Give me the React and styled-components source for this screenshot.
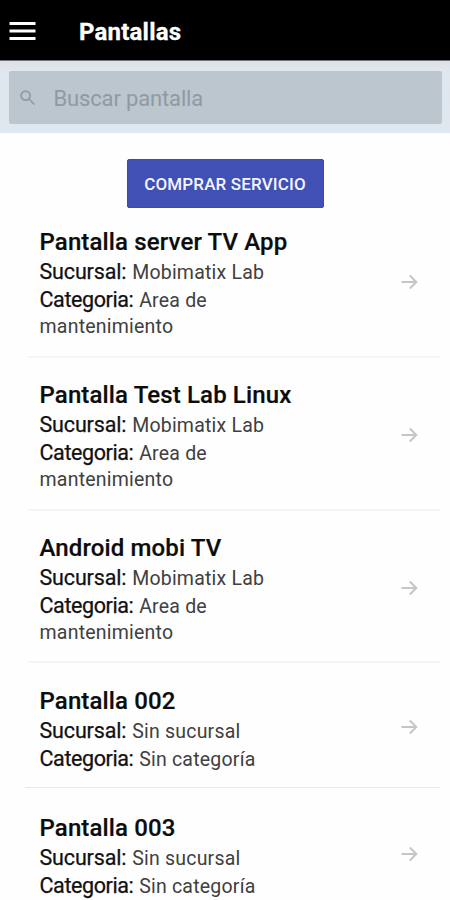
import React from "react";
import styled, { createGlobalStyle } from "styled-components";

const Global = createGlobalStyle`
  * { box-sizing: border-box; }
  body { margin: 0; background: #fff; font-family: Roboto, sans-serif; overflow: hidden; }
`;
const Screen = styled.main`
  width: 450px;
  height: 900px;
  overflow: hidden;
  background: #fefefe;
`;
const TopBar = styled.header`
  height: 61px;
  background: #000;
  border-bottom: 1px solid #6f7376;
  display: flex;
  align-items: center;
  padding: 1px 0 0 9px;
`;
const MenuButton = styled.button`
  border: 0;
  padding: 0;
  background: none;
  width: 70px;
  display: flex;
`;
const Title = styled.h1`
  margin: 2px 0 0;
  color: #fff;
  font-size: 24px;
  font-weight: 700;
  line-height: 30px;
  letter-spacing: 0.2px;
  -webkit-text-stroke: 0.3px #fff;
`;
const SearchBar = styled.div`
  height: 72px;
  background: linear-gradient(#dfe2e6, #e0e7ee 10px, #dfe7ef);
  padding: 10px 8px 9px 9px;
`;
const SearchField = styled.label`
  height: 53px;
  background: #bbc6ce;
  border-radius: 2px;
  display: flex;
  align-items: center;
  padding: 1px 0 0 11px;
  gap: 17.5px;
  color: #8f9aa3;
  font-size: 22px;
  letter-spacing: -0.15px;
`;
const Actions = styled.div`
  padding-top: 26px;
  height: 85px;
  display: flex;
  justify-content: center;
`;
const BuyButton = styled.button`
  width: 197px;
  height: 49px;
  border: 1px solid #3a4ab2;
  border-radius: 2px;
  padding: 1px 0 0;
  background: #4050b5;
  color: #f4f5ff;
  font: 500 17px Roboto, sans-serif;
  letter-spacing: 0.15px;
`;
const List = styled.ul`
  margin: 0;
  padding: 0 10px 0 28px;
  list-style: none;
`;
const Row = styled.li`
  height: ${(p) => p.$height}px;
  padding: ${(p) => p.$top}px 22px 0 11.5px;
  border-bottom: 2px solid #f5f5f5;
  display: flex;
  justify-content: space-between;

  &:nth-child(4) {
    margin-left: -3px;
    padding-left: 14.5px;
    border-bottom: 1px solid #e9e9e9;
  }
`;
const Name = styled.h2`
  margin: 0 0 1px;
  font-size: 24px;
  line-height: 29px;
  font-weight: 500;
  letter-spacing: 0.13px;
  color: #0c0c0c;
  -webkit-text-stroke: 0.2px #0c0c0c;
  white-space: nowrap;
`;
const Detail = styled.p`
  margin: 0;
  height: 28px;
  font-size: 19.5px;
  line-height: 28px;
  letter-spacing: 0.22px;
  color: #404040;

  & + & + & {
    line-height: 26px;
  }
`;
const Label = styled.span`
  font-size: 21.5px;
  letter-spacing: ${(p) => p.$tracking}px;
  margin-right: 0.7px;
  color: #111;
  -webkit-text-stroke: 0.25px #111;
`;
const Arrow = styled.svg`
  flex: none;
  margin-top: ${(p) => p.$offset}px;
`;

const screens = [
  { name: "Pantalla server TV App", branch: "Mobimatix Lab", category: ["Area de", "mantenimiento"], height: 140, top: 10 },
  { name: "Pantalla Test Lab Linux", branch: "Mobimatix Lab", category: ["Area de", "mantenimiento"], height: 153, top: 23 },
  { name: "Android mobi TV", branch: "Mobimatix Lab", category: ["Area de", "mantenimiento"], height: 152, top: 23 },
  { name: "Pantalla 002", branch: "Sin sucursal", category: ["Sin categoría"], height: 125, top: 24 },
  { name: "Pantalla 003", branch: "Sin sucursal", category: ["Sin categoría"], height: 126, top: 26 },
];

export default function App() {
  return (
    <Screen>
      <Global />
      <TopBar>
        <MenuButton aria-label="Menu">
          <svg width="27" height="18" viewBox="0 0 27 18" fill="#fff">
            <path d="M.5 0h26v3H.5zM.5 7.5h26v3H.5zM.5 15h26v3H.5z" />
          </svg>
        </MenuButton>
        <Title>Pantallas</Title>
      </TopBar>
      <SearchBar>
        <SearchField>
          <svg width="16" height="16" viewBox="0 0 16 16" fill="none" stroke="#8f9aa3" strokeWidth="1.7">
            <circle cx="5.6" cy="5.6" r="4.5" />
            <path d="M9 9l5.5 5.5" />
          </svg>
          <span>Buscar pantalla</span>
        </SearchField>
      </SearchBar>
      <Actions>
        <BuyButton>COMPRAR SERVICIO</BuyButton>
      </Actions>
      <List>
        {screens.map((s) => (
          <Row key={s.name} $height={s.height} $top={s.top}>
            <div>
              <Name>{s.name}</Name>
              <Detail><Label $tracking={-0.15}>Sucursal:</Label> {s.branch}</Detail>
              <Detail><Label $tracking={-0.4}>Categoria:</Label> {s.category[0]}</Detail>
              {s.category[1] && <Detail>{s.category[1]}</Detail>}
            </div>
            <Arrow $offset={s.category[1] ? 46 : 32} width="17" height="16" viewBox="0 0 17 16" fill="none" stroke="#c6c6c6" strokeWidth="2">
              <path d="M.5 8h14.5M8.8 1.5l6.5 6.5-6.5 6.5" />
            </Arrow>
          </Row>
        ))}
      </List>
    </Screen>
  );
}
